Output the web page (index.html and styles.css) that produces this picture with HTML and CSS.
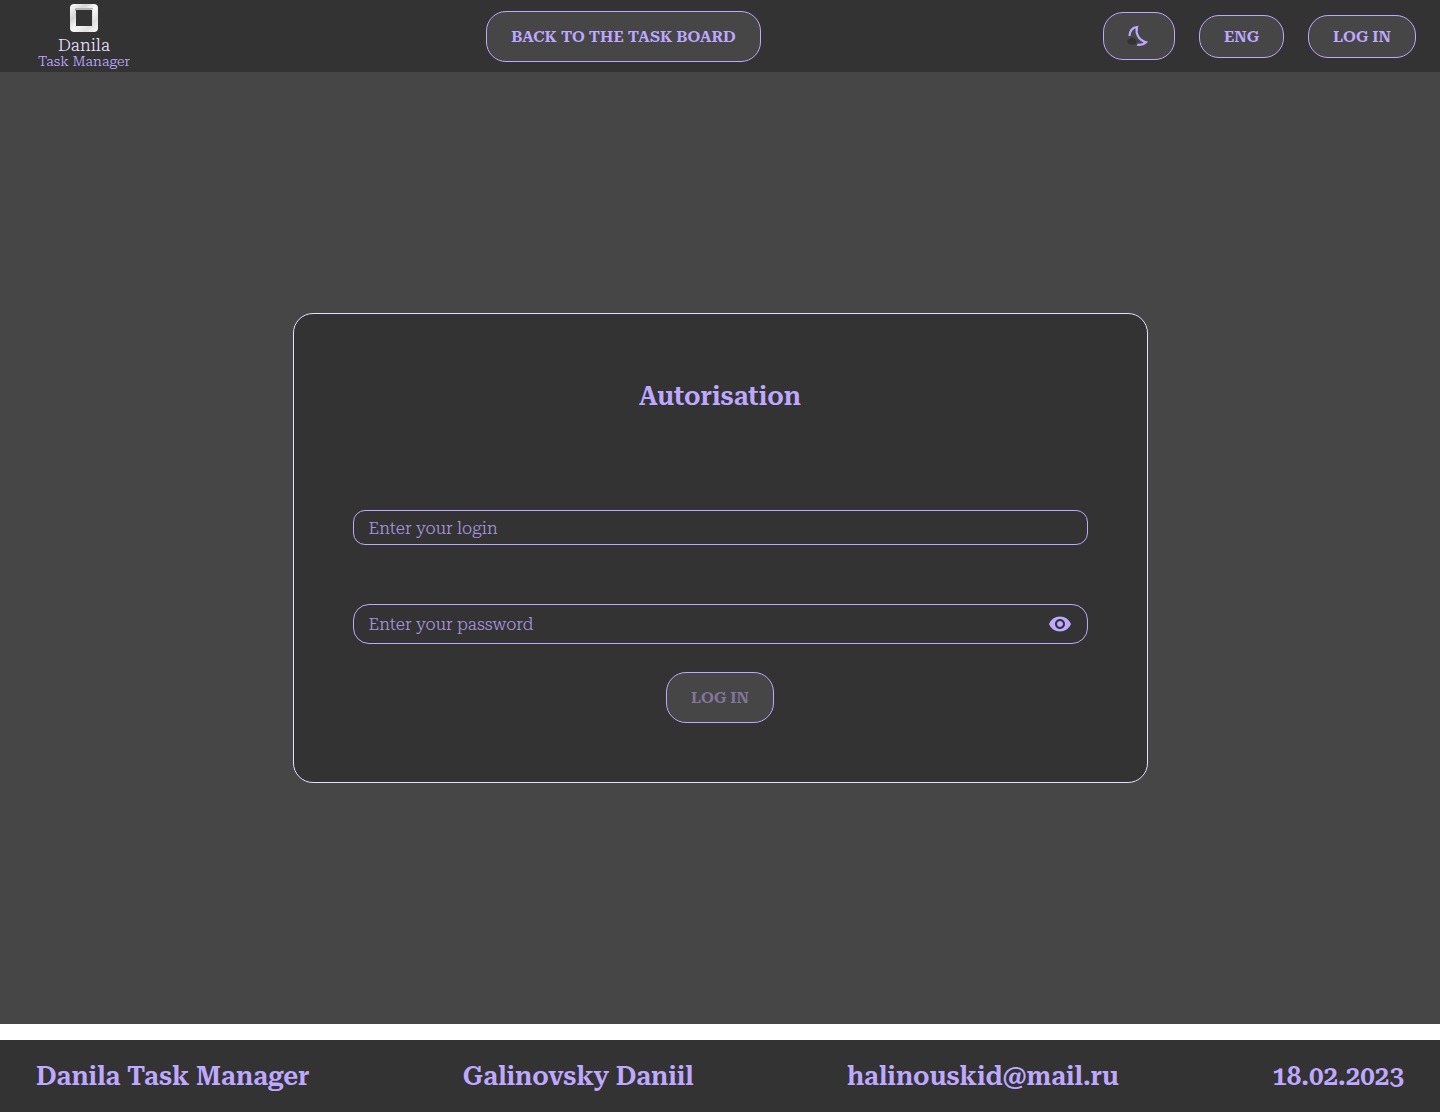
FILE: index.html
```html
<!DOCTYPE html>
<html lang="en">
<head>
  <meta charset="utf-8">
  <meta name="viewport" content="width=device-width, initial-scale=1">
  <title>Danila Task Manager</title>
  <link rel="stylesheet" href="styles.css">
</head>
<body>
  <header class="header">
    <a class="logo" href="#">
      <svg class="logo-mark" viewBox="0 0 30 30" aria-hidden="true">
        <defs>
          <linearGradient id="metal" x1="0" y1="0" x2="1" y2="1">
            <stop offset="0" stop-color="#fff"/>
            <stop offset=".3" stop-color="#d6d6d6"/>
            <stop offset=".5" stop-color="#fafafa"/>
            <stop offset=".75" stop-color="#e0e0e0"/>
            <stop offset="1" stop-color="#f8f8f8"/>
          </linearGradient>
        </defs>
        <rect x="1" y="1" width="28" height="28" rx="4" fill="url(#metal)"/>
        <path d="M6 5h18v3H6z" fill="#b4b4b4"/>
        <path d="M22 6h2v18h-2z" fill="#dcdcdc"/>
        <rect x="7" y="7" width="16" height="16" fill="#333"/>
      </svg>
      <span class="logo-name">Danila</span>
      <span class="logo-product">Task Manager</span>
    </a>
    <button class="button" type="button">BACK TO THE TASK BOARD</button>
    <nav class="controls" aria-label="Settings">
      <button class="button button-theme" type="button" aria-label="Switch theme">
        <svg class="icon" viewBox="0 0 24 24" aria-hidden="true">
          <path d="M3.500 20.500C2 20.500.500 19.300.500 17.500c0-1.700 1.200-2.500 2.400-2.600 1-2 3.900-1.800 4.600.100 1.300 0 2 1 2 2.500 0 1.700-1 3-2.700 3z" fill="#333"/>
          <path d="M2.500 12C2.500 7 5.500 3.200 10 3 8.300 9.500 11.500 16 19 18.200c-2 2-5.200 2.900-8.800 2.600" fill="none" stroke="#bfa8ff" stroke-width="2.200"/>
        </svg>
      </button>
      <button class="button button-small" type="button">ENG</button>
      <button class="button button-small" type="button">LOG IN</button>
    </nav>
  </header>

  <main class="main">
    <form class="card">
      <h1 class="title">Autorisation</h1>
      <input class="field field-login" type="text" placeholder="Enter your login" aria-label="Login">
      <div class="field field-password">
        <input class="password-input" type="password" placeholder="Enter your password" aria-label="Password">
        <button class="eye" type="button" aria-label="Show password">
          <svg class="icon" viewBox="0 0 24 24" aria-hidden="true">
            <path fill="currentColor" d="M12 4.500C7 4.500 2.730 7.610 1 12c1.730 4.390 6 7.500 11 7.500s9.270-3.110 11-7.500c-1.730-4.390-6-7.500-11-7.500zM12 17c-2.760 0-5-2.240-5-5s2.240-5 5-5 5 2.240 5 5-2.240 5-5 5zm0-8c-1.660 0-3 1.340-3 3s1.340 3 3 3 3-1.340 3-3-1.340-3-3-3z"/>
          </svg>
        </button>
      </div>
      <button class="button submit" type="submit" disabled>LOG IN</button>
    </form>
  </main>

  <footer class="footer">
    <span>Danila Task Manager</span>
    <span>Galinovsky Daniil</span>
    <a class="footer-link" href="mailto:halinouskid@mail.ru">halinouskid@mail.ru</a>
    <span>18.02.2023</span>
  </footer>
</body>
</html>
```
FILE: styles.css
```css
* {
  box-sizing: border-box;
}

body {
  display: flex;
  flex-direction: column;
  min-height: 100vh;
  margin: 0;
  background: #fff;
  color: #bfa8ff;
  font-family: "Roboto Serif", "DejaVu Serif", serif;
  font-size: 17px;
  font-weight: 300;
}

button,
input {
  font: inherit;
  color: inherit;
}

.header {
  display: flex;
  align-items: center;
  justify-content: space-between;
  height: 72px;
  padding: 0 24px;
  background: #333;
}

.logo {
  display: flex;
  flex-direction: column;
  align-items: center;
  width: 120px;
  color: inherit;
  text-decoration: none;
}

.logo-mark {
  width: 30px;
  height: 30px;
  margin-bottom: 4px;
}

.logo-name {
  color: #e6dfff;
  line-height: 16px;
}

.logo-product {
  font-size: 14px;
  line-height: 16px;
  white-space: nowrap;
}

.controls {
  display: flex;
  align-items: center;
  gap: 24px;
}

.button {
  height: 51px;
  padding: 0 24px;
  border: 1px solid #bfa8ff;
  border-radius: 20px;
  background: #464646;
  font-size: 16px;
  font-weight: 600;
  white-space: nowrap;
  cursor: pointer;
}

.button-small {
  height: 43px;
}

.button-theme {
  height: 48px;
  padding: 0 23px;
}

.icon {
  display: block;
  width: 24px;
  height: 24px;
}

.main {
  display: flex;
  flex: 1;
  align-items: center;
  justify-content: center;
  padding: 24px;
  background: #464646;
}

.card {
  display: flex;
  flex-direction: column;
  align-items: center;
  width: 100%;
  max-width: 855px;
  padding: 59px;
  border: 1px solid #e6dfff;
  border-radius: 20px;
  background: #333;
}

.title {
  margin: 0 0 91px;
  font-size: 26px;
  font-weight: 600;
  line-height: 46px;
}

.field {
  width: 100%;
  border: 1px solid #bfa8ff;
  background: transparent;
}

.field-login {
  height: 35px;
  margin-bottom: 59px;
  padding: 0 15px;
  border-radius: 12px;
}

.field-password {
  display: flex;
  align-items: center;
  height: 40px;
  margin-bottom: 28px;
  padding: 0 15px;
  border-radius: 16px;
}

.password-input {
  flex: 1;
  min-width: 0;
  padding: 0;
  border: 0;
  background: transparent;
}

.field-login::placeholder,
.password-input::placeholder {
  color: #a592da;
  opacity: 1;
}

.eye {
  padding: 0;
  border: 0;
  background: none;
  cursor: pointer;
}

.submit:disabled {
  color: #83769f;
  cursor: default;
}

.footer {
  display: flex;
  align-items: center;
  justify-content: space-between;
  height: 72px;
  margin-top: 16px;
  padding: 0 36px;
  background: #333;
  font-size: 26px;
  font-weight: 600;
}

.footer-link {
  color: inherit;
  text-decoration: none;
}
```
